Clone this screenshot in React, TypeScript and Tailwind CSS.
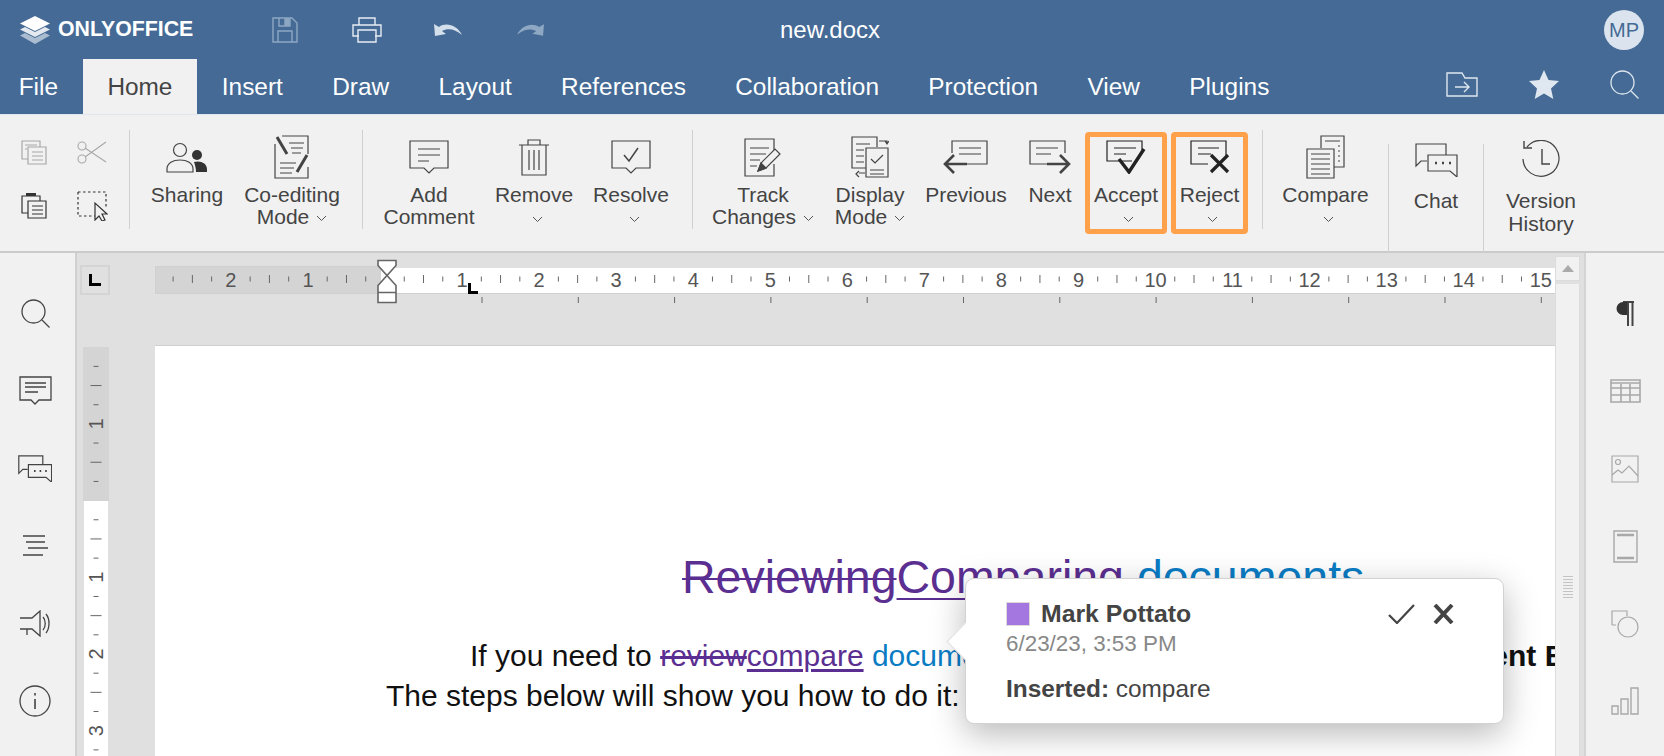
import React from 'react';

const INK = '#444444';
const Chevron = ({ className = '' }: { className?: string }) => (
  <svg width="11" height="7" viewBox="0 0 11 7" className={`inline-block ${className}`}>
    <path d="M1 1l4.5 4.5L10 1" fill="none" stroke="#555" strokeWidth="1" />
  </svg>
);

const Ic = ({ w, h, children, sw = 1.2, color = INK }: { w: number; h: number; children: React.ReactNode; sw?: number; color?: string }) => (
  <svg width={w} height={h} viewBox={`0 0 ${w} ${h}`} fill="none" stroke={color} strokeWidth={sw} className="block shrink-0">
    {children}
  </svg>
);

const bubbleLines = (
  <>
    <path d="M1 1h38v27H25l-5 5-5-5H1z" />
    <path d="M9 9h22M9 15h22M9 21h11" />
  </>
);

const Sharing = () => (
  <Ic w={42} h={31}>
    <circle cx="14" cy="8" r="6.5" />
    <path d="M1 30v-3c0-6 6-9 13-9s13 3 13 9v3z" />
    <circle cx="31" cy="13" r="5" fill="#333" stroke="none" />
    <path d="M28 20c6-2 13 1 13 7v3H30c0-4-1-7-2-10z" fill="#333" stroke="none" />
  </Ic>
);

const CoEditing = () => (
  <Ic w={36} h={44}>
    <path d="M8 1h26v18M34 32v11H1V9" />
    <path d="M3 2l10 17M33 20L23 37" strokeWidth="3" />
    <path d="M15 8h15M17 13h12M18 18h9M6 28h16M6 33h14M6 38h12" />
  </Ic>
);

const AddComment = () => <Ic w={40} h={34}>{bubbleLines}</Ic>;

const Trash = () => (
  <Ic w={32} h={38}>
    <path d="M1 7h30M10 7V2h12v5M4 7v30h24V7M11 12v20M16 12v20M21 12v20" />
  </Ic>
);

const Resolve = () => (
  <Ic w={40} h={34}>
    <path d="M1 1h38v27H25l-5 5-5-5H1z" />
    <path d="M13 15l5 6 9-13" strokeWidth="1.5" />
  </Ic>
);

const Track = () => (
  <Ic w={38} h={39}>
    <path d="M30 13V1H1v37h29V26" />
    <path d="M6 10h19M6 16h16M6 22h10M6 28h7" />
    <path d="M14 33l3-8 14-14 5 5-14 14z" fill="#f1f1f1" />
    <path d="M14 33l3-8 5 5z" fill="#444" />
  </Ic>
);

const DisplayMode = () => (
  <Ic w={38} h={42}>
    <path d="M24 32H1V1h25v10" />
    <path d="M5 8h14M5 14h8M5 20h8M5 26h8" />
    <path d="M15 12h22v29H15z" fill="#f1f1f1" />
    <path d="M19 34h14M19 38h14M20 23l4 4 8-8M28 5h8v3M34 5l2 3 2-3M8 37h6M8 35l-3 3 3 3" />
  </Ic>
);

const Previous = () => (
  <Ic w={46} h={34}>
    <path d="M9 13V1h35v23H22" />
    <path d="M16 8h22M16 14h22" />
    <path d="M24 24H3M11 15l-9 9 9 9" strokeWidth="2.6" />
  </Ic>
);

const Next = () => (
  <Ic w={42} h={34}>
    <path d="M24 24H1V1h35v12" />
    <path d="M7 8h22M7 14h15" />
    <path d="M18 24h21M31 15l9 9-9 9" strokeWidth="2.6" />
  </Ic>
);

const Accept = () => (
  <Ic w={40} h={34} color="#222">
    <path d="M26 21H1V1h35v9" />
    <path d="M8 8h22M8 14h12" />
    <path d="M13 19l10 13L38 9" strokeWidth="3.4" />
  </Ic>
);

const Reject = () => (
  <Ic w={40} h={34} color="#222">
    <path d="M18 24H1V1h35v15" />
    <path d="M8 8h21M8 14h13" />
    <path d="M21 15l17 17M38 15L21 32" strokeWidth="3.2" />
  </Ic>
);

const Compare = () => (
  <Ic w={39} h={44}>
    <path d="M15 13V1h23v31H28" />
    <path d="M19 6h15M32 11h2M32 16h2M32 21h2M32 26h2" />
    <path d="M1 14h27v29H1z" />
    <path d="M5 19h19M5 24h19M5 29h19M5 34h19M5 39h19" />
  </Ic>
);

const Chat = ({ s = 1 }: { s?: number }) => (
  <svg width={43 * s} height={34 * s} viewBox="0 0 43 34" fill="none" stroke={INK} strokeWidth={1.2 / s} className="block shrink-0">
    <path d="M12 18H6l-5 5V1h30v11" />
    <path d="M13 12h29v22l-7-6H13z" />
    <path d="M20 20h2M27 20h2M34 20h2" strokeWidth="2.4" />
  </svg>
);

const Version = () => (
  <Ic w={40} h={39}>
    <path d="M6 7a18 18 0 1 1-4 12" />
    <path d="M3 1v7h8M21 9v15h8" strokeWidth="1.4" />
  </Ic>
);

const CopyIc = ({ color }: { color: string }) => (
  <Ic w={26} h={25} color={color}>
    <path d="M7 19H1V1h18v6" />
    <path d="M7 7h18v17H7z" />
    <path d="M4 5h12M4 9h2M11 12h11M11 16h11M11 20h11" />
  </Ic>
);

const Scissors = () => (
  <Ic w={30} h={23} color="#a8a8a8" sw={1.1}>
    <circle cx="5" cy="5" r="4" />
    <circle cx="5" cy="18" r="4" />
    <path d="M8 7l21 14M8 16L29 1" />
  </Ic>
);

const Paste = () => (
  <Ic w={26} h={26} color="#333">
    <path d="M7 20H1V3h18v5" />
    <path d="M7 8h18v17H7z" />
    <path d="M5 1.5h10" strokeWidth="3" />
    <path d="M11 13h11M11 17h11M11 21h11" />
  </Ic>
);

const SelectAll = () => (
  <Ic w={31} h={30} color="#333">
    <path d="M1 1h28v15M1 1v24h17" strokeDasharray="2.5 2.5" />
    <path d="M18 12v17l4-4 3 5 3-1-3-6h5z" fill="#f1f1f1" />
  </Ic>
);

const tools = [
  { w: 114, label: ['Sharing'], icon: <Sharing /> },
  { w: 96, label: ['Co-editing', 'Mode'], icon: <CoEditing />, inline: true },
];

const Divider = ({ tall = false }: { tall?: boolean }) => (
  <div className={`w-px shrink-0 bg-[#d0d0d0] ${tall ? 'mt-[29px] h-[109px]' : 'mt-[15px] h-[99px]'}`} />
);

const Tool = ({ w, label, icon, drop, inline, low, mark }: { w: number; label: string[]; icon: React.ReactNode; drop?: boolean; inline?: boolean; low?: boolean; mark?: boolean }) => (
  <div style={{ width: w }} className="relative flex shrink-0 flex-col items-center pt-[15px]">
    <div className={`flex items-center justify-center ${low ? 'h-[59px]' : 'h-[54px]'}`}>{icon}</div>
    <div className={`whitespace-nowrap text-center text-[21px] text-[#444] ${low ? 'leading-[23px]' : 'leading-[22px]'}`}>
      {label.map((l, i) => (
        <div key={l}>
          {l}
          {inline && i === label.length - 1 && <Chevron className="ml-[7px] align-middle" />}
        </div>
      ))}
      {drop && (
        <div className="flex h-[26px] items-center justify-center pl-[6px]">
          <Chevron />
        </div>
      )}
    </div>
    {mark && <div className="absolute inset-x-0 top-[17px] h-[102px] rounded-[4px] border-[5px] border-[#ffa14a]" />}
  </div>
);

const Ruler = () => {
  const inches = Array.from({ length: 19 }, (_, i) => i - 3);
  const X = 230;
  const U = 77.05;
  return (
    <svg width="1400" height="92" viewBox="0 1 1400 92" className="block shrink-0" fontFamily="'Liberation Sans',sans-serif">
      <rect x="0.5" y="14.5" width="226" height="27" fill="#d4d4d4" stroke="#d0d0d0" />
      <rect x="226" y="16" width="1174" height="25" fill="#fff" />
      {inches.map((n) => (
        <g key={n}>
          {n !== 0 && n !== -3 && (
            <text x={X + n * U} y="34.5" fontSize="20" fill="#555" textAnchor="middle">
              {Math.abs(n)}
            </text>
          )}
          {[0.25, 0.5, 0.75].map((q) => {
            const x = X + (n + q) * U;
            if (x > 1395) return null;
            const h = q === 0.5 ? 8 : 5;
            return <path key={q} d={`M${x} ${27 - h / 2}v${h}`} stroke="#666" strokeWidth="1" />;
          })}
        </g>
      ))}
      <rect x="0" y="41" width="1400" height="1" fill="#d0d0d0" />
      {Array.from({ length: 12 }, (_, i) => (
        <path key={i} d={`M${327 + i * 96.3} 45v6`} stroke="#666" strokeWidth="1" />
      ))}
      <path d="M223 8.5h18v5l-9 10-9-10zM232 23.5l9 10v7h-18v-7zM223 40.5h18v10h-18z" fill="#fff" stroke="#666" strokeWidth="1.6" />
      <path d="M314.5 31v9.5H323" fill="none" stroke="#000" strokeWidth="3" />
    </svg>
  );
};

const VRuler = () => {
  const O = 153.6;
  const U = 76.7;
  const inches = [-2, -1, 0, 1, 2, 3];
  return (
    <svg width="26" height="410" viewBox="0 0 26 410" className="mt-[2px] block" fontFamily="'Liberation Sans',sans-serif">
      <rect width="26" height="154" fill="#d4d4d4" />
      <rect x="1" y="154" width="24" height="256" fill="#fff" />
      {inches.map((n) => (
        <g key={n}>
          {n !== 0 && n !== -2 && (
            <text transform={`translate(20 ${O + n * U}) rotate(-90)`} fontSize="20" fill="#555" textAnchor="middle">
              {Math.abs(n)}
            </text>
          )}
          {[0.25, 0.5, 0.75].map((q) => {
            const h = q === 0.5 ? 11 : 5;
            return <path key={q} d={`M${13 - h / 2} ${O + (n + q) * U}h${h}`} stroke="#666" strokeWidth="1" />;
          })}
        </g>
      ))}
    </svg>
  );
};

const RailBtn = ({ children }: { children: React.ReactNode }) => (
  <div className="flex h-[77.5px] items-center justify-center">{children}</div>
);

export default function App() {
  return (
    <div className="flex h-[756px] w-[1664px] flex-col overflow-hidden bg-[#e0e0e0] font-['Liberation_Sans',sans-serif]">
      <header className="h-[115px] shrink-0 border-b border-[#dfe6ee] bg-[#446a95]">
        <div className="flex h-[59px] items-center pl-[20px]">
          <div className="flex w-[540px] shrink-0 items-center">
            <svg width="30" height="28" viewBox="0 0 30 28" className="shrink-0">
              <path d="M15 0l15 7.5L15 15 0 7.5z" fill="#fff" />
              <path d="M5 11l10 5 10-5 5 2.5L15 21 0 13.500z" fill="#fff" opacity="0.85" />
              <path d="M5 17l10 5 10-5 5 2.500L15 28 0 19.500z" fill="#fff" opacity="0.55" />
            </svg>
            <span className="ml-[8px] w-[213px] text-[21.3px] font-bold text-white">ONLYOFFICE</span>
            <div className="flex w-[27px] justify-center">
              <Ic w={26} h={26} color="#8ea8c4" sw={1.4}>
                <path d="M1 1h19l5 5v19H1z" />
                <path d="M7 1v8h11V1M6 25V14h14v11" />
                <path d="M13 2h4v6h-4z" fill="#8ea8c4" />
              </Ic>
            </div>
            <div className="ml-[54px] flex w-[30px] justify-center">
              <Ic w={30} h={26} color="#e6edf4" sw={1.4}>
                <path d="M7 8V1h16v7M7 19H1V8h28v11h-6" />
                <path d="M6 13h18v12H6z" />
              </Ic>
            </div>
            <svg width="28" height="14" viewBox="0 0 28 14" className="ml-[52px]">
              <path d="M0 1l1 12 11-2-4-3c6-3 13-2 20 4C23 2 12-1 5 4z" fill="#d3dfeb" />
            </svg>
            <svg width="27" height="14" viewBox="0 0 28 14" className="ml-[55px]">
              <path d="M28 1l-1 12-11-2 4-3C14 5 7 6 0 12 5 2 16-1 23 4z" fill="#8ea8c4" />
            </svg>
          </div>
          <div className="w-[540px] text-center text-[24px] leading-none text-white">new.docx</div>
          <div className="ml-auto mr-[20px] flex size-[40px] items-center justify-center rounded-full bg-[#dbe4ee] text-[20px] text-[#446a95]">
            MP
          </div>
        </div>
        <div className="flex h-[55px]">
          <nav className="ml-[-6px] flex h-full">
            {['File', 'Home', 'Insert', 'Draw', 'Layout', 'References', 'Collaboration', 'Protection', 'View', 'Plugins'].map((t) => (
              <div key={t} className={`flex items-center px-[24.7px] pt-[2px] text-[24.4px] ${t === 'Home' ? 'bg-[#f1f1f1] text-[#444]' : 'text-white'}`}>
                {t}
              </div>
            ))}
          </nav>
          <div className="ml-auto mr-[25px] flex items-center gap-[51px] pb-[4px]">
            <Ic w={32} h={25} color="#dfe7f0" sw={1.4}>
              <path d="M1 1h15l3 5h12v18H1z" />
              <path d="M9 15h14M18 10l5 5-5 5" />
            </Ic>
            <svg width="30" height="29" viewBox="0 0 30 29">
              <path d="M15 0l4.500 10L30 11l-8 7.500L24.300 29 15 23.500 5.700 29 8 18.500 0 11l10.500-1z" fill="#dfe7f0" />
            </svg>
            <Ic w={29} h={29} color="#dfe7f0" sw={1.3}>
              <circle cx="12.500" cy="12.500" r="11.500" />
              <path d="M21 21l7.500 7.500" />
            </Ic>
          </div>
        </div>
      </header>

      <div className="flex h-[138px] shrink-0 border-b-2 border-[#cbcbcb] bg-[#f1f1f1]">
        <div className="w-[129px] shrink-0 pl-[5px] pt-[10px]">
          <div className="grid grid-cols-[58px_58px] grid-rows-[54px_54px] place-items-center">
            <CopyIc color="#a8a8a8" />
            <Scissors />
            <Paste />
            <SelectAll />
          </div>
        </div>
        <Divider />
        {tools.map((t) => (
          <Tool key={t.w} {...t} />
        ))}
        <div className="w-[22px] shrink-0" />
        <Divider />
        <Tool w={132} label={['Add', 'Comment']} icon={<AddComment />} />
        <Tool w={78} label={['Remove']} icon={<Trash />} drop />
        <Tool w={116} label={['Resolve']} icon={<Resolve />} drop />
        <div className="w-[3px] shrink-0" />
        <Divider />
        <Tool w={140} label={['Track', 'Changes']} icon={<Track />} inline />
        <Tool w={74} label={['Display', 'Mode']} icon={<DisplayMode />} inline />
        <Tool w={118} label={['Previous']} icon={<Previous />} />
        <Tool w={50} label={['Next']} icon={<Next />} />
        <div className="w-[10px] shrink-0" />
        <Tool w={82} label={['Accept']} icon={<Accept />} drop mark />
        <div className="w-[4px] shrink-0" />
        <Tool w={77} label={['Reject']} icon={<Reject />} drop mark />
        <div className="w-[14px] shrink-0" />
        <Divider />
        <Tool w={125} label={['Compare']} icon={<Compare />} drop />
        <Divider tall />
        <Tool w={94} label={['Chat']} icon={<Chat />} low />
        <Divider tall />
        <Tool w={114} label={['Version', 'History']} icon={<Version />} low />
      </div>

      <div className="flex min-h-0 flex-1">
        <aside className="w-[77px] shrink-0 border-r-2 border-[#d0d0d0] bg-[#f1f1f1] pr-[5px] pt-[22px]">
          <RailBtn>
            <Ic w={29} h={29} sw={1.3}>
              <circle cx="12.500" cy="12.500" r="11.500" />
              <path d="M21 21l7.500 7.500" />
            </Ic>
          </RailBtn>
          <RailBtn>
            <Ic w={33} h={30} sw={1.3}>
              <path d="M1 1h31v23H20l-4 4-4-4H1z" />
              <path d="M6 7h21M6 11h21M6 16h13" />
            </Ic>
          </RailBtn>
          <RailBtn>
            <Chat s={0.8} />
          </RailBtn>
          <RailBtn>
            <Ic w={27} h={22} sw={1.3}>
              <path d="M1 1h22M4 7h19M6 13h20M1 20h20" />
            </Ic>
          </RailBtn>
          <RailBtn>
            <Ic w={32} h={27} sw={1.3}>
              <path d="M1 8h12l8-7v25l-8-7H8v6M8 19H1z" />
              <path d="M24 7c3 3 3 10 0 13M27 4c4 5 4 14 0 19" />
            </Ic>
          </RailBtn>
          <RailBtn>
            <Ic w={32} h={32} sw={1.3}>
              <circle cx="16" cy="16" r="15" />
              <path d="M16 14v10M16 8v2.500" strokeWidth="1.6" />
            </Ic>
          </RailBtn>
        </aside>

        <main className="relative w-[1478px] shrink-0 overflow-hidden bg-[#e0e0e0]">
          <div className="flex h-[92px]">
            <div className="w-[78px] shrink-0 pl-[3px] pt-[12px]">
              <div className="flex size-[30px] items-center justify-center border-2 border-[#d4d4d4]">
                <svg width="12" height="12" viewBox="0 0 12 12">
                  <path d="M1.500 0v10.500H12" fill="none" stroke="#000" strokeWidth="3" />
                </svg>
              </div>
            </div>
            <Ruler />
          </div>
          <div className="flex">
            <div className="w-[78px] shrink-0 pl-[6px]">
              <VRuler />
            </div>
            <div className="h-[411px] w-[1732px] shrink-0 border-t border-[#cfcfcf] bg-white pt-[205px] text-[30px] leading-[40px] text-[#111] whitespace-nowrap">
              <div className="ml-[527px] text-[46.5px] leading-[52px] font-light">
                <span className="text-[#5b2e91] line-through decoration-2">Reviewing</span>
                <span className="text-[#5b2e91] underline decoration-2 underline-offset-[5px]">Comparing</span>
                <span className="text-[#0a7cc4]"> documents</span>
              </div>
              <div className="ml-[315px] mt-[33px]">
                If you need to <span className="text-[#5b2e91] line-through">review</span>
                <span className="text-[#5b2e91] underline underline-offset-[3px]">compare</span>{' '}
                <span className="text-[#0a7cc4]">documents</span> and files in <b className="ml-[12px]">ONLYOFFICE Document Editor</b>
              </div>
              <div className="ml-[231px]">The steps below will show you how to do it:</div>
            </div>
          </div>

          <div className="absolute left-[888px] top-[325px] h-[146px] w-[539px] rounded-[9px] border border-[#d2d2d2] bg-white pl-[40px] pr-[49px] pt-[22px] shadow-[0_10px_34px_rgba(0,0,0,0.28)]">
            <div className="absolute left-[-14px] top-[49px] size-[27px] rotate-45 border-b border-l border-[#dedede] bg-white" />
            <div className="flex items-center">
              <div className="size-[24px] border border-[#dcdcdc] bg-[#a476e0]" />
              <div className="ml-[11px] text-[24.8px] font-bold leading-[26px] text-[#444]">Mark Pottato</div>
              <div className="ml-auto flex items-center gap-[18px]">
                <Ic w={27} h={20} sw={2.2}>
                  <path d="M1 11l8 8L26 1" />
                </Ic>
                <Ic w={21} h={20} sw={4}>
                  <path d="M2 1l17 18M19 1L2 19" />
                </Ic>
              </div>
            </div>
            <div className="mt-[4px] text-[22.4px] leading-[26px] text-[#888]">6/23/23, 3:53 PM</div>
            <div className="mt-[19px] text-[24.4px] leading-[26px] text-[#444]">
              <b>Inserted:</b> compare
            </div>
          </div>
        </main>

        <div className="flex w-[25px] shrink-0 flex-col bg-[#e0e0e0] pt-[3px]">
          <div className="flex h-[25px] items-center justify-center border border-[#dcdcdc] bg-[#f1f1f1]">
            <svg width="12" height="7" viewBox="0 0 12 7">
              <path d="M6 0l6 7H0z" fill="#aaa" />
            </svg>
          </div>
          <div className="mt-[3px] flex-1 border-x border-[#dcdcdc] bg-[#f1f1f1] pt-[292px]">
            <div className="mx-auto flex w-[10px] flex-col gap-[2px]">
              {[0, 1, 2, 3, 4, 5, 6, 7].map((i) => (
                <div key={i} className="h-px bg-[#c4c4c4]" />
              ))}
            </div>
          </div>
        </div>
        <div className="w-[4px] shrink-0" />

        <aside className="flex-1 border-l-2 border-[#d4d4d4] bg-[#f1f1f1] pt-[22px]">
          <RailBtn>
            <svg width="20" height="25" viewBox="0 0 20 25">
              <path d="M8 1h11M13 1v24M17.500 1v24" fill="none" stroke="#444" strokeWidth="2" />
              <path d="M12 1H8a6 6 0 0 0 0 13h4z" fill="#333" />
            </svg>
          </RailBtn>
          <RailBtn>
            <Ic w={31} h={24} color="#a8a8a8" sw={1.6}>
              <path d="M1 1h29v22H1zM1 9h29M1 16h29M11 5v18M20 5v18M1 4h29" />
            </Ic>
          </RailBtn>
          <RailBtn>
            <Ic w={28} h={28} color="#a8a8a8">
              <path d="M1 1h26v26H1z" />
              <circle cx="7" cy="7" r="2.500" />
              <path d="M1 20l6-5 4 3 7-7 9 10" />
            </Ic>
          </RailBtn>
          <RailBtn>
            <Ic w={25} h={33} color="#a8a8a8" sw={1.4}>
              <path d="M1 1h23v31H1z" />
              <path d="M4 5h17M4 28h17" strokeWidth="2.400" />
            </Ic>
          </RailBtn>
          <RailBtn>
            <Ic w={28} h={28} color="#a8a8a8">
              <path d="M1 15V1h15v5M1 15h4" />
              <circle cx="17" cy="17" r="10" />
            </Ic>
          </RailBtn>
          <RailBtn>
            <Ic w={28} h={28} color="#a8a8a8" sw={1.4}>
              <path d="M1 19h6v8H1zM10 12h7v15h-7zM20 1h7v26h-7z" />
            </Ic>
          </RailBtn>
        </aside>
      </div>
    </div>
  );
}
